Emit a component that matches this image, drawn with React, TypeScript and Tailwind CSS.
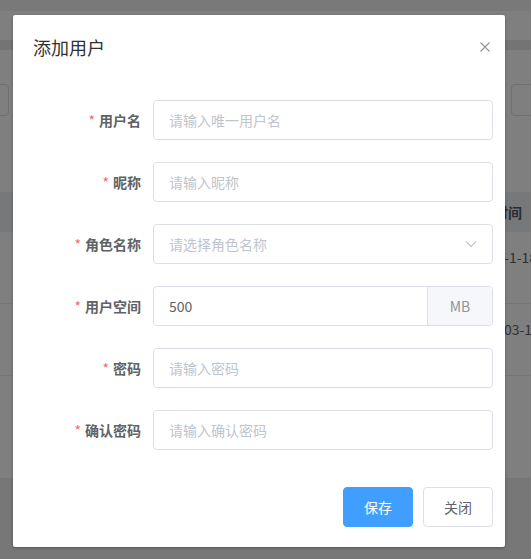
import React from 'react';

// 表单字段定义
const fields = [
  { label: '用户名', placeholder: '请输入唯一用户名' },
  { label: '昵称', placeholder: '请输入昵称' },
  { label: '角色名称', placeholder: '请选择角色名称', select: true },
  { label: '用户空间', value: '500', append: 'MB' },
  { label: '密码', placeholder: '请输入密码' },
  { label: '确认密码', placeholder: '请输入确认密码' },
];

function FormRow({ field }: { field: any }) {
  return (
    <div className="flex items-center h-[40px]">
      <label className="w-[120px] pr-[12px] text-right text-[14px] font-bold text-[#606266] leading-[40px]">
        <span className="text-[#F56C6C] mr-[4px] font-normal">*</span>
        {field.label}
      </label>
      <div className="flex-1 flex h-[40px] border border-[#DCDFE6] rounded-[4px] bg-white overflow-hidden">
        <div className="flex-1 flex items-center pl-[15px] pr-[15px] text-[14px]">
          {field.value ? (
            <span className="text-[#606266]">{field.value}</span>
          ) : (
            <span className="text-[#C0C4CC]">{field.placeholder}</span>
          )}
          {field.select && (
            <svg className="ml-auto" width="12" height="8" viewBox="0 0 12 8">
              <path d="M1 1.5 L6 6.5 L11 1.5" fill="none" stroke="#C0C4CC" strokeWidth="1.1" />
            </svg>
          )}
        </div>
        {field.append && (
          <div className="w-[65px] flex items-center justify-center bg-[#F5F7FA] border-l border-[#DCDFE6] text-[14px] text-[#909399]">
            {field.append}
          </div>
        )}
      </div>
    </div>
  );
}

export default function App() {
  return (
    <div
      className="relative h-[559px] w-[531px] overflow-hidden bg-white"
      style={{ fontFamily: '"Noto Sans CJK SC", "Noto Sans", sans-serif' }}
    >
      {/* 背景页面 */}
      <div className="flex flex-col h-full">
        <div className="h-[11px] bg-[#f2f2f2]" />
        <div className="h-[29px] bg-white" />
        <div className="h-[10px] bg-[#e8e8e8]" />
        <div className="h-[142px] bg-white flex justify-between pt-[34px]">
          <div className="ml-[-20px] w-[29px] h-[32px] border border-[#DCDFE6] rounded-[4px]" />
          <div className="mr-[-40px] w-[60px] h-[32px] border border-[#DCDFE6] rounded-[4px]" />
        </div>
        <div className="h-[40px] bg-[#eef0f4] flex items-center pl-[466px] text-[14px] font-bold text-[#515a6e] whitespace-nowrap">
          创建时间
        </div>
        <div className="h-[72px] bg-white border-b border-[#e8eaec] flex items-center pl-[473px] text-[14px] text-[#606266] whitespace-nowrap pb-[20px]">
          2023-1-18 10:22:31
        </div>
        <div className="h-[72px] bg-white border-b border-[#e8eaec] flex items-center pl-[468px] text-[14px] text-[#606266] whitespace-nowrap pb-[20px]">
          2023-03-18 16:05:12
        </div>
        <div className="h-[103px] bg-white border-b border-[#e8eaec]" />
        <div className="flex-1 bg-[#eeeeee]" />
      </div>

      {/* 遮罩层 + 对话框 */}
      <div className="absolute inset-0 bg-black/50">
        <div className="mt-[15px] ml-[13px] w-[492px] h-[532px] bg-white rounded-[2px] shadow-[0_1px_3px_rgba(0,0,0,0.3)] flex flex-col">
          <div className="flex items-center justify-between pt-[20px] pb-[10px] pl-[20px] pr-[15px]">
            <span className="text-[18px] leading-[24px] text-[#303133]">添加用户</span>
            <svg width="10" height="10" viewBox="0 0 10 10">
              <path d="M0.5 0.5 L9.5 9.5 M9.5 0.5 L0.5 9.5" stroke="#909399" strokeWidth="1.1" />
            </svg>
          </div>

          <div className="flex flex-col gap-[22px] pt-[31px] pl-[20px] pr-[12px]">
            {fields.map((f, i) => (
              <FormRow key={i} field={f} />
            ))}
          </div>

          <div className="flex justify-end gap-[10px] pt-[37px] pr-[12px]">
            <button className="h-[40px] w-[70px] rounded-[4px] bg-[#409EFF] border border-[#409EFF] text-white text-[14px]">
              保存
            </button>
            <button className="h-[40px] w-[70px] rounded-[4px] bg-white border border-[#DCDFE6] text-[#606266] text-[14px]">
              关闭
            </button>
          </div>
        </div>
      </div>
    </div>
  );
}
